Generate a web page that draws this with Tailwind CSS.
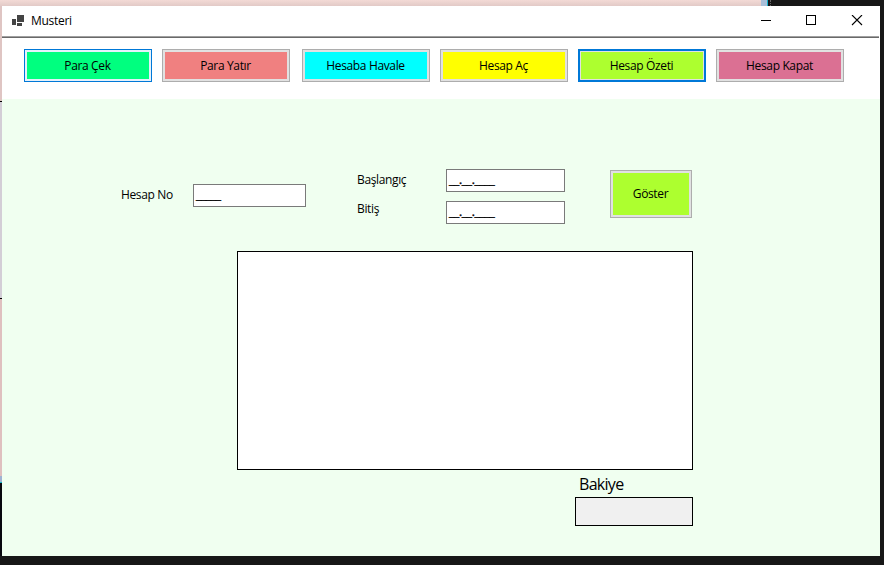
<!DOCTYPE html>
<html lang="tr">
<head>
<meta charset="utf-8">
<title>Musteri</title>
<script src="https://cdn.jsdelivr.net/npm/@tailwindcss/browser@4"></script>
</head>
<body class="relative w-[884px] h-[565px] overflow-hidden bg-[#171717] font-['Open_Sans','Noto_Sans',sans-serif] text-[12px] leading-4 tracking-[-0.36px] text-black">
<!-- desktop behind the window -->
<div class="absolute left-0 top-0 flex h-[6px] w-[771px]">
  <div class="w-[761px] bg-linear-to-b from-[#f3dad6] to-[#e2cac7]"></div>
  <div class="w-[6px] bg-[#a9bfd9]"></div>
  <div class="w-px bg-[#18b5cf]"></div>
  <div class="w-[2px] bg-[#17171b]"></div>
  <div class="w-px border-l border-dotted border-[#666]"></div>
</div>
<div class="absolute left-0 top-[6px] flex h-[550px] w-[2px] flex-col">
  <div class="h-[95px] bg-[#dfc5c3]"></div>
  <div class="h-px bg-black"></div>
  <div class="h-[196px] bg-[#d3ced6]"></div>
  <div class="h-px bg-black"></div>
  <div class="h-[177px] bg-[#dfc0bf]"></div>
  <div class="h-[6px] bg-[#9fb2d2]"></div>
  <div class="h-px bg-[#14b5c4]"></div>
  <div class="flex-1 bg-[#08080f]"></div>
</div>
<!-- window -->
<main class="absolute left-[2px] top-[6px] flex h-[550px] w-[878px] flex-col bg-white">
  <header class="flex h-[30px] shrink-0 items-center pl-[10px]">
    <svg class="h-[12px] w-[13px] shrink-0" viewBox="0 0 13 12" fill="#444" shape-rendering="crispEdges"><path d="M5 0h7v7H5zM0 4h4v6H0zM5 8h5v3H5z"/></svg>
    <h1 class="ml-[6px] tracking-[-0.3px]">Musteri</h1>
    <svg class="ml-auto mr-[16px] h-[12px] w-[104px]" viewBox="0 0 104 12" fill="none" stroke="#000"><path d="M1 5.5h10M46.5 .5h9v9h-9z" shape-rendering="crispEdges"/><path d="M92 0l10 10M102 0L92 10" stroke-width="1.1"/></svg>
  </header>
  <div class="mr-px h-[2px] shrink-0 border-t border-[#a0a0a0] bg-[#696969]"></div>
  <nav class="flex h-[61px] shrink-0 gap-[10px] pl-[22px] pt-[11px]">
    <button class="h-[33px] w-[128px] border border-[#0078d7] bg-[#e5f1fb] p-[2px]"><span class="flex h-full items-center justify-center bg-[#00ff7f] pr-px pt-px">Para Çek</span></button>
    <button class="h-[33px] w-[128px] border border-[#adadad] bg-[#e1e1e1] p-[2px]"><span class="flex h-full items-center justify-center bg-[#f08080] pr-px pt-px">Para Yatır</span></button>
    <button class="ml-[2px] h-[33px] w-[128px] border border-[#adadad] bg-[#e1e1e1] p-[2px]"><span class="flex h-full items-center justify-center bg-[#00ffff] pr-px pt-px">Hesaba Havale</span></button>
    <button class="h-[33px] w-[128px] border border-[#adadad] bg-[#e1e1e1] p-[2px]"><span class="flex h-full items-center justify-center bg-[#ffff00] pr-px pt-px">Hesap Aç</span></button>
    <button class="h-[33px] w-[128px] border-2 border-[#0078d7] bg-[#e1e1e1] p-px"><span class="flex h-full items-center justify-center bg-[#adff2f] pr-px pt-px">Hesap Özeti</span></button>
    <button class="h-[33px] w-[128px] border border-[#adadad] bg-[#e1e1e1] p-[2px]"><span class="flex h-full items-center justify-center bg-[#db7093] pr-px pt-px">Hesap Kapat</span></button>
  </nav>
  <section class="flex flex-1 flex-col bg-[#f0fff0] pt-[70px]">
    <div class="flex h-[82px] items-start pl-[119px]">
      <label class="mt-[18px] w-[72px]">Hesap No</label>
      <div class="mt-[15px] h-[23px] w-[113px] border border-[#7a7a7a] bg-white pl-[2px] pt-[2px] tracking-[-0.32px] [-webkit-text-stroke:0.4px_#000]">_____</div>
      <div class="ml-[51px] flex w-[89px] flex-col gap-[13px] pt-[3px]"><label>Başlangıç</label><label>Bitiş</label></div>
      <div class="flex flex-col gap-[9px]">
        <div class="h-[23px] w-[119px] border border-[#7a7a7a] bg-white pl-[2px] pt-[2px] tracking-[-0.3px] [-webkit-text-stroke:0.4px_#000]">__.__.____</div>
        <div class="h-[23px] w-[119px] border border-[#7a7a7a] bg-white pl-[2px] pt-[2px] tracking-[-0.3px] [-webkit-text-stroke:0.4px_#000]">__.__.____</div>
      </div>
      <button class="ml-[45px] mt-px h-[48px] w-[82px] border border-[#adadad] bg-[#e1e1e1] p-[2px]"><span class="flex h-full items-center justify-center bg-[#adff2f] pb-px pr-px">Göster</span></button>
    </div>
    <div class="ml-[235px] h-[219px] w-[456px] border border-black bg-white"></div>
    <div class="ml-[573px] flex w-[118px] flex-col">
      <label class="flex h-[27px] items-center pl-[4px] text-[16px] tracking-[-0.7px]">Bakiye</label>
      <div class="h-[29px] border border-black bg-[#f0f0f0]"></div>
    </div>
  </section>
</main>
</body>
</html>
